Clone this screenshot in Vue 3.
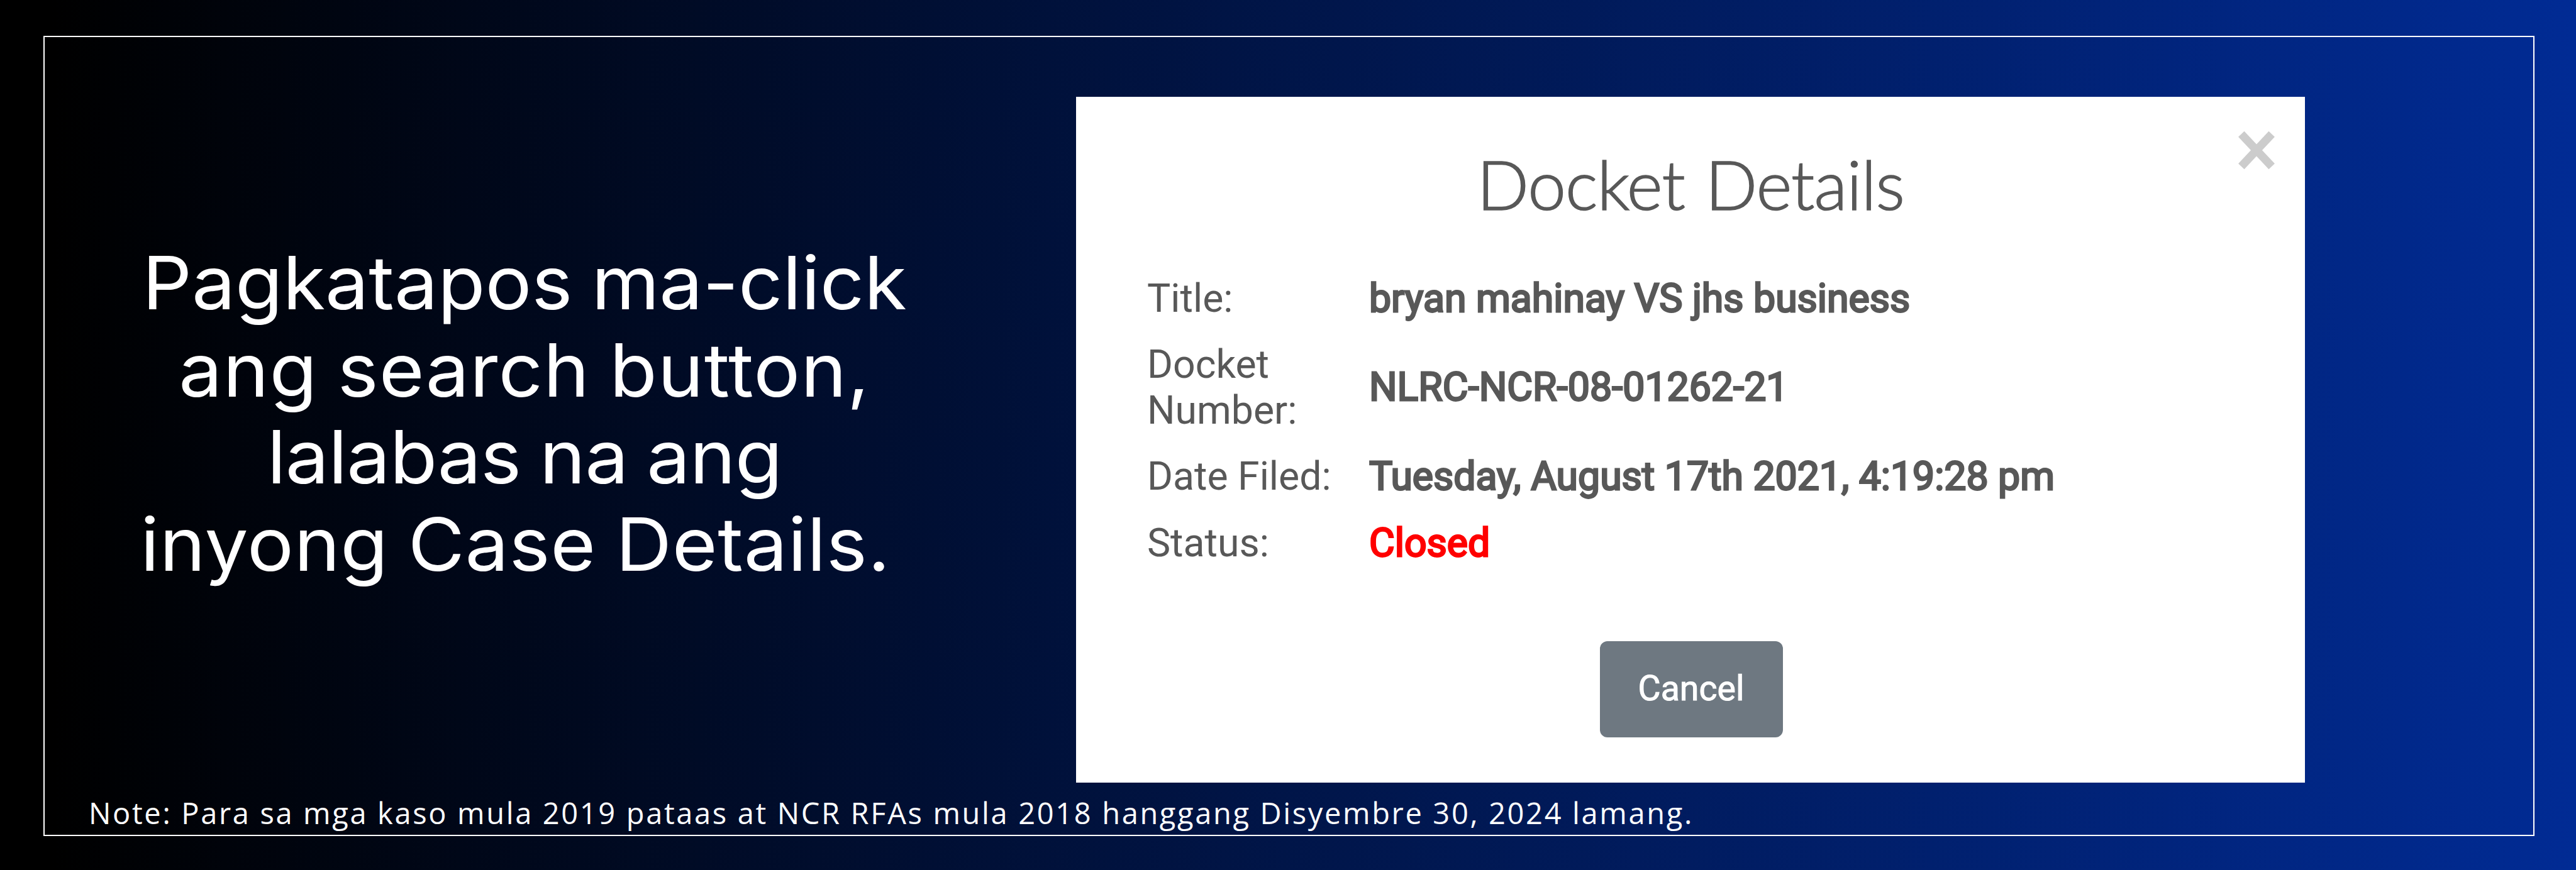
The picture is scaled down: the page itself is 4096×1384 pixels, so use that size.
<script setup>
const headline = [
	{ text: 'Pagkatapos ma-click', spacing: '-0.2px' },
	{ text: 'ang search button,', spacing: '0.9px' },
	{ text: 'lalabas na ang', spacing: '-0.8px' },
	{ text: 'inyong Case Details.', spacing: '0.6px' },
];

const rows = [
	{ label: 'Title:', value: 'bryan mahinay VS jhs business' },
	{ label: 'Docket Number:', value: 'NLRC-NCR-08-01262-21' },
	{ label: 'Date Filed:', value: 'Tuesday, August 17th 2021, 4:19:28 pm' },
	{ label: 'Status:', value: 'Closed', closed: true },
];
</script>

<template>
	<div class="slide">
		<div class="frame">
			<div class="content">
				<h1 class="headline">
					<span
						v-for="line in headline"
						:key="line.text"
						class="headline-line"
						:style="{ letterSpacing: line.spacing }"
					>{{ line.text }}</span>
				</h1>

				<section class="modal">
					<button class="modal-close" aria-label="Close">
						<svg viewBox="0 0 60 62">
							<path d="M5.8 5.3L54.2 56.7M54.2 5.3L5.8 56.7" />
						</svg>
					</button>
					<h2 class="modal-title">Docket Details</h2>
					<dl class="details">
						<div v-for="row in rows" :key="row.label" class="details-row">
							<dt>{{ row.label }}</dt>
							<dd :class="{ closed: row.closed }">{{ row.value }}</dd>
						</div>
					</dl>
					<button class="cancel">Cancel</button>
				</section>
			</div>

			<p class="note">Note: Para sa mga kaso mula 2019 pataas at NCR RFAs mula 2018 hanggang Disyembre 30, 2024 lamang.</p>
		</div>
	</div>
</template>

<style>
body {
	margin: 0;
	background: #000;
}
</style>

<style scoped>
.slide {
	box-sizing: border-box;
	width: 4096px;
	height: 1384px;
	padding: 57px 66px 54px 69px;
	overflow: hidden;
	background: linear-gradient(90deg, #000 2%, #012b94 100%);
}

.frame {
	box-sizing: border-box;
	height: 1273px;
	border: 2px solid #fff;
}

.content {
	display: flex;
	box-sizing: border-box;
	height: 1202px;
	padding-top: 95px;
}

/* Headline */
.headline {
	display: flex;
	flex-direction: column;
	align-items: center;
	width: 1526px;
	margin: 227px 0 0;
	color: #fff;
	font: 400 117px/138.6px Inter, sans-serif;
}

.headline-line {
	white-space: nowrap;
	word-spacing: -4px;
	transform: scaleX(1.055);
}

.headline-line:last-child {
	padding-right: 28px;
}

/* Modal */
.modal {
	position: relative;
	display: flex;
	flex-direction: column;
	align-items: center;
	box-sizing: border-box;
	width: 1954px;
	height: 1091px;
	margin-left: 114px;
	background: #fff;
	color: #585858;
	font-family: Roboto, sans-serif;
}

.modal-close {
	position: absolute;
	top: 54px;
	right: 47px;
	width: 60px;
	height: 62px;
	padding: 0;
	border: 0;
	background: none;
}

.modal-close svg {
	display: block;
	fill: none;
	stroke: #ccc;
	stroke-width: 13;
}

.modal-title {
	margin: 78px 0 0;
	font: 300 109px/120px Lato, sans-serif;
	letter-spacing: -1px;
	word-spacing: 4px;
	white-space: nowrap;
	-webkit-text-stroke: 1.6px currentColor;
}

.details {
	align-self: stretch;
	margin: 70px 0 0 113px;
	font-size: 62.5px;
	line-height: 72.6px;
}

.details-row {
	display: grid;
	grid-template-columns: 353px 1fr;
	align-items: center;
	padding: 16.5px 0;
}

.details dt {
	width: 320px;
}

.details dd {
	margin: 0;
	-webkit-text-stroke: 2.8px currentColor;
	white-space: nowrap;
}

.details .closed {
	color: #f00;
}

.cancel {
	width: 291px;
	height: 153px;
	margin: 103px 0 0 2px;
	padding: 0 0 2px;
	border: 0;
	border-radius: 12px;
	background: #6e7881;
	color: #fff;
	font: 400 55.5px Roboto, sans-serif;
	-webkit-text-stroke: 1px currentColor;
}

/* Footnote */
.note {
	margin: 0;
	padding-left: 70px;
	color: #fff;
	font: 400 47px/64px "Open Sans", sans-serif;
	letter-spacing: 2.65px;
	white-space: nowrap;
}
</style>
